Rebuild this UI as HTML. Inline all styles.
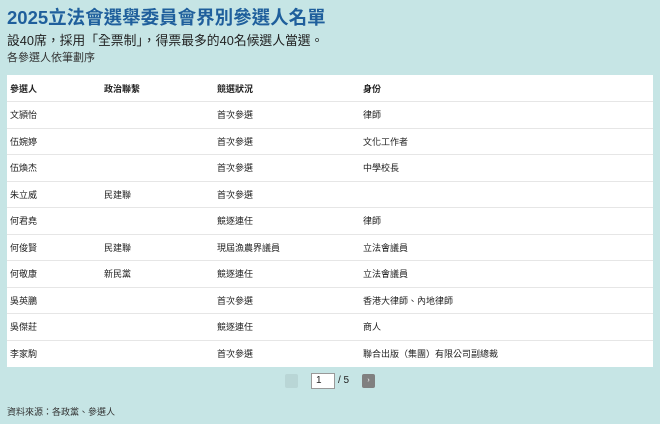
<!DOCTYPE html>
<html><head><meta charset="utf-8"><style>
body{margin:0;width:660px;height:424px;background:#c6e5e5;font-family:"Liberation Sans","Noto Sans CJK TC",sans-serif;color:#222;position:relative;overflow:hidden}
h1{position:absolute;left:7px;top:6px;margin:0;font-size:18.5px;line-height:24px;color:#1f5f9c;font-weight:bold;letter-spacing:0}
.s1{position:absolute;left:7px;top:32px;font-size:12.8px;line-height:18px;color:#222}
.s2{position:absolute;left:7px;top:51px;font-size:11px;line-height:15px;color:#333}
table{position:absolute;left:7px;top:75px;width:646px;border-collapse:collapse;background:#fff;font-size:9px}
td,th{height:26.5px;padding:0 0 0 3px;text-align:left;border-bottom:1px solid #e6e6e6;box-sizing:border-box}
th{font-weight:bold;color:#222}
tr:last-child td{border-bottom:none}
.c1{width:94px}.c2{width:113px}.c3{width:146px}
.pg{position:absolute;top:375px;font-size:10px}
.src{position:absolute;left:7px;top:405px;font-size:9px;color:#333}
</style></head><body>
<h1>2025立法會選舉委員會界別參選人名單</h1>
<div class="s1">設40席，採用「全票制」，得票最多的40名候選人當選。</div>
<div class="s2">各參選人依筆劃序</div>
<table>
<tr><th class="c1">參選人</th><th class="c2">政治聯繫</th><th class="c3">競選狀況</th><th>身份</th></tr>
<tr><td>文頴怡</td><td></td><td>首次參選</td><td>律師</td></tr>
<tr><td>伍婉婷</td><td></td><td>首次參選</td><td>文化工作者</td></tr>
<tr><td>伍煥杰</td><td></td><td>首次參選</td><td>中學校長</td></tr>
<tr><td>朱立威</td><td>民建聯</td><td>首次參選</td><td></td></tr>
<tr><td>何君堯</td><td></td><td>競逐連任</td><td>律師</td></tr>
<tr><td>何俊賢</td><td>民建聯</td><td>現屆漁農界議員</td><td>立法會議員</td></tr>
<tr><td>何敬康</td><td>新民黨</td><td>競逐連任</td><td>立法會議員</td></tr>
<tr><td>吳英鵬</td><td></td><td>首次參選</td><td>香港大律師、內地律師</td></tr>
<tr><td>吳傑莊</td><td></td><td>競逐連任</td><td>商人</td></tr>
<tr><td>李家駒</td><td></td><td>首次參選</td><td>聯合出版（集團）有限公司副總裁</td></tr>
</table>
<div style="position:absolute;left:285px;top:374px;width:13px;height:14px;background:#b9d6d6;border-radius:2px"></div>
<div style="position:absolute;left:311px;top:373px;width:24px;height:16px;background:#fff;border:1px solid #999;box-sizing:border-box;font-size:10px;line-height:14px;padding-left:4px">1</div>
<div class="pg" style="left:338px">/ 5</div>
<div style="position:absolute;left:362px;top:374px;width:13px;height:14px;background:#808080;border-radius:2px;color:#fff;font-size:7px;line-height:14px;text-align:center">›</div>
<div class="src">資料來源：各政黨、參選人</div>
</body></html>
